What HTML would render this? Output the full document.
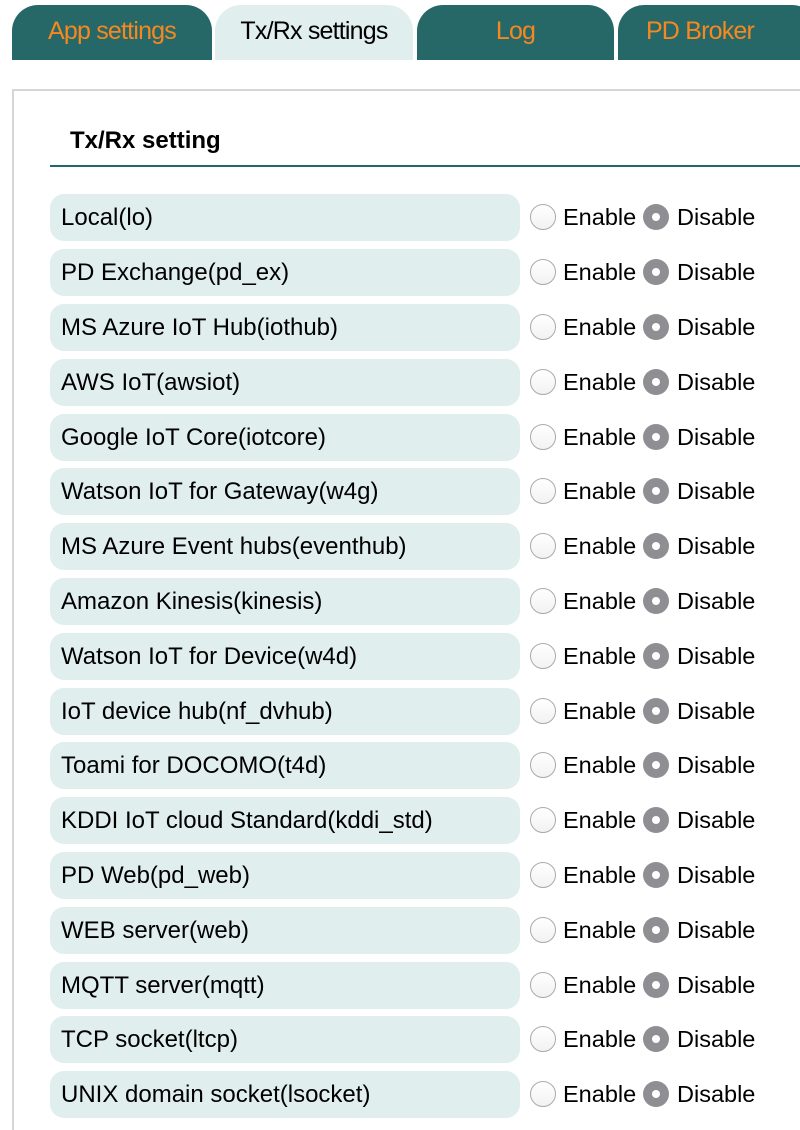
<!DOCTYPE html>
<html><head><style>
html,body{margin:0;width:800px;height:1130px;overflow:hidden;background:#fff;font-family:"Liberation Sans",Arial,sans-serif;position:relative}
.tab{position:absolute;top:5px;height:55px;border-radius:26px 26px 0 0;background:#266868;color:#f7881f;font-size:25px;text-align:center;line-height:52px;letter-spacing:-0.8px}
.tab.a{background:#e0eeed;color:#000}
.box{position:absolute;left:12px;top:89px;width:800px;height:1040px;border-left:2px solid #d6d6d6;border-top:2px solid #d6d6d6}
h2{position:absolute;left:70px;top:127px;margin:0;font-size:24px;font-weight:bold}
.line{position:absolute;left:50px;top:165px;width:760px;height:2px;background:#266868}
.row{position:absolute;left:50px;width:470px;height:47px;border-radius:14px;background:#e0eeed;font-size:24px;line-height:47px;padding-left:11px;box-sizing:border-box;white-space:nowrap}
.r{position:absolute;font-size:23.5px;line-height:47px}
.c{position:absolute;width:26px;height:26px;border-radius:50%;box-sizing:border-box}
.e{border:1px solid #aaa;background:linear-gradient(#fff,#f2f2f2)}
.d{background:#8e8e93}
.d::after{content:"";position:absolute;left:9px;top:9px;width:8px;height:8px;border-radius:50%;background:#fff}
</style></head><body>
<div class="tab" style="left:12px;width:200px">App settings</div>
<div class="tab a" style="left:215px;width:198px">Tx/Rx settings</div>
<div class="tab" style="left:417px;width:197px">Log</div>
<div class="tab" style="left:618px;width:200px;text-indent:-36px">PD Broker</div>
<div class="box"></div>
<h2>Tx/Rx setting</h2>
<div class="line"></div>
<div class="row" style="top:194px">Local(lo)</div>
<div class="row" style="top:249px">PD Exchange(pd_ex)</div>
<div class="row" style="top:304px">MS Azure IoT Hub(iothub)</div>
<div class="row" style="top:359px">AWS IoT(awsiot)</div>
<div class="row" style="top:414px">Google IoT Core(iotcore)</div>
<div class="row" style="top:468px">Watson IoT for Gateway(w4g)</div>
<div class="row" style="top:523px">MS Azure Event hubs(eventhub)</div>
<div class="row" style="top:578px">Amazon Kinesis(kinesis)</div>
<div class="row" style="top:633px">Watson IoT for Device(w4d)</div>
<div class="row" style="top:688px">IoT device hub(nf_dvhub)</div>
<div class="row" style="top:742px">Toami for DOCOMO(t4d)</div>
<div class="row" style="top:797px">KDDI IoT cloud Standard(kddi_std)</div>
<div class="row" style="top:852px">PD Web(pd_web)</div>
<div class="row" style="top:907px">WEB server(web)</div>
<div class="row" style="top:962px">MQTT server(mqtt)</div>
<div class="row" style="top:1016px">TCP socket(ltcp)</div>
<div class="row" style="top:1071px">UNIX domain socket(lsocket)</div>
<div style="position:absolute;top:194px;left:0"><div class="c e" style="left:530px;top:10px"></div><div class="r" style="left:563px;top:0">Enable</div><div class="c d" style="left:643px;top:10px"></div><div class="r" style="left:677px;top:0">Disable</div></div>
<div style="position:absolute;top:249px;left:0"><div class="c e" style="left:530px;top:10px"></div><div class="r" style="left:563px;top:0">Enable</div><div class="c d" style="left:643px;top:10px"></div><div class="r" style="left:677px;top:0">Disable</div></div>
<div style="position:absolute;top:304px;left:0"><div class="c e" style="left:530px;top:10px"></div><div class="r" style="left:563px;top:0">Enable</div><div class="c d" style="left:643px;top:10px"></div><div class="r" style="left:677px;top:0">Disable</div></div>
<div style="position:absolute;top:359px;left:0"><div class="c e" style="left:530px;top:10px"></div><div class="r" style="left:563px;top:0">Enable</div><div class="c d" style="left:643px;top:10px"></div><div class="r" style="left:677px;top:0">Disable</div></div>
<div style="position:absolute;top:414px;left:0"><div class="c e" style="left:530px;top:10px"></div><div class="r" style="left:563px;top:0">Enable</div><div class="c d" style="left:643px;top:10px"></div><div class="r" style="left:677px;top:0">Disable</div></div>
<div style="position:absolute;top:468px;left:0"><div class="c e" style="left:530px;top:10px"></div><div class="r" style="left:563px;top:0">Enable</div><div class="c d" style="left:643px;top:10px"></div><div class="r" style="left:677px;top:0">Disable</div></div>
<div style="position:absolute;top:523px;left:0"><div class="c e" style="left:530px;top:10px"></div><div class="r" style="left:563px;top:0">Enable</div><div class="c d" style="left:643px;top:10px"></div><div class="r" style="left:677px;top:0">Disable</div></div>
<div style="position:absolute;top:578px;left:0"><div class="c e" style="left:530px;top:10px"></div><div class="r" style="left:563px;top:0">Enable</div><div class="c d" style="left:643px;top:10px"></div><div class="r" style="left:677px;top:0">Disable</div></div>
<div style="position:absolute;top:633px;left:0"><div class="c e" style="left:530px;top:10px"></div><div class="r" style="left:563px;top:0">Enable</div><div class="c d" style="left:643px;top:10px"></div><div class="r" style="left:677px;top:0">Disable</div></div>
<div style="position:absolute;top:688px;left:0"><div class="c e" style="left:530px;top:10px"></div><div class="r" style="left:563px;top:0">Enable</div><div class="c d" style="left:643px;top:10px"></div><div class="r" style="left:677px;top:0">Disable</div></div>
<div style="position:absolute;top:742px;left:0"><div class="c e" style="left:530px;top:10px"></div><div class="r" style="left:563px;top:0">Enable</div><div class="c d" style="left:643px;top:10px"></div><div class="r" style="left:677px;top:0">Disable</div></div>
<div style="position:absolute;top:797px;left:0"><div class="c e" style="left:530px;top:10px"></div><div class="r" style="left:563px;top:0">Enable</div><div class="c d" style="left:643px;top:10px"></div><div class="r" style="left:677px;top:0">Disable</div></div>
<div style="position:absolute;top:852px;left:0"><div class="c e" style="left:530px;top:10px"></div><div class="r" style="left:563px;top:0">Enable</div><div class="c d" style="left:643px;top:10px"></div><div class="r" style="left:677px;top:0">Disable</div></div>
<div style="position:absolute;top:907px;left:0"><div class="c e" style="left:530px;top:10px"></div><div class="r" style="left:563px;top:0">Enable</div><div class="c d" style="left:643px;top:10px"></div><div class="r" style="left:677px;top:0">Disable</div></div>
<div style="position:absolute;top:962px;left:0"><div class="c e" style="left:530px;top:10px"></div><div class="r" style="left:563px;top:0">Enable</div><div class="c d" style="left:643px;top:10px"></div><div class="r" style="left:677px;top:0">Disable</div></div>
<div style="position:absolute;top:1016px;left:0"><div class="c e" style="left:530px;top:10px"></div><div class="r" style="left:563px;top:0">Enable</div><div class="c d" style="left:643px;top:10px"></div><div class="r" style="left:677px;top:0">Disable</div></div>
<div style="position:absolute;top:1071px;left:0"><div class="c e" style="left:530px;top:10px"></div><div class="r" style="left:563px;top:0">Enable</div><div class="c d" style="left:643px;top:10px"></div><div class="r" style="left:677px;top:0">Disable</div></div>
</body></html>
